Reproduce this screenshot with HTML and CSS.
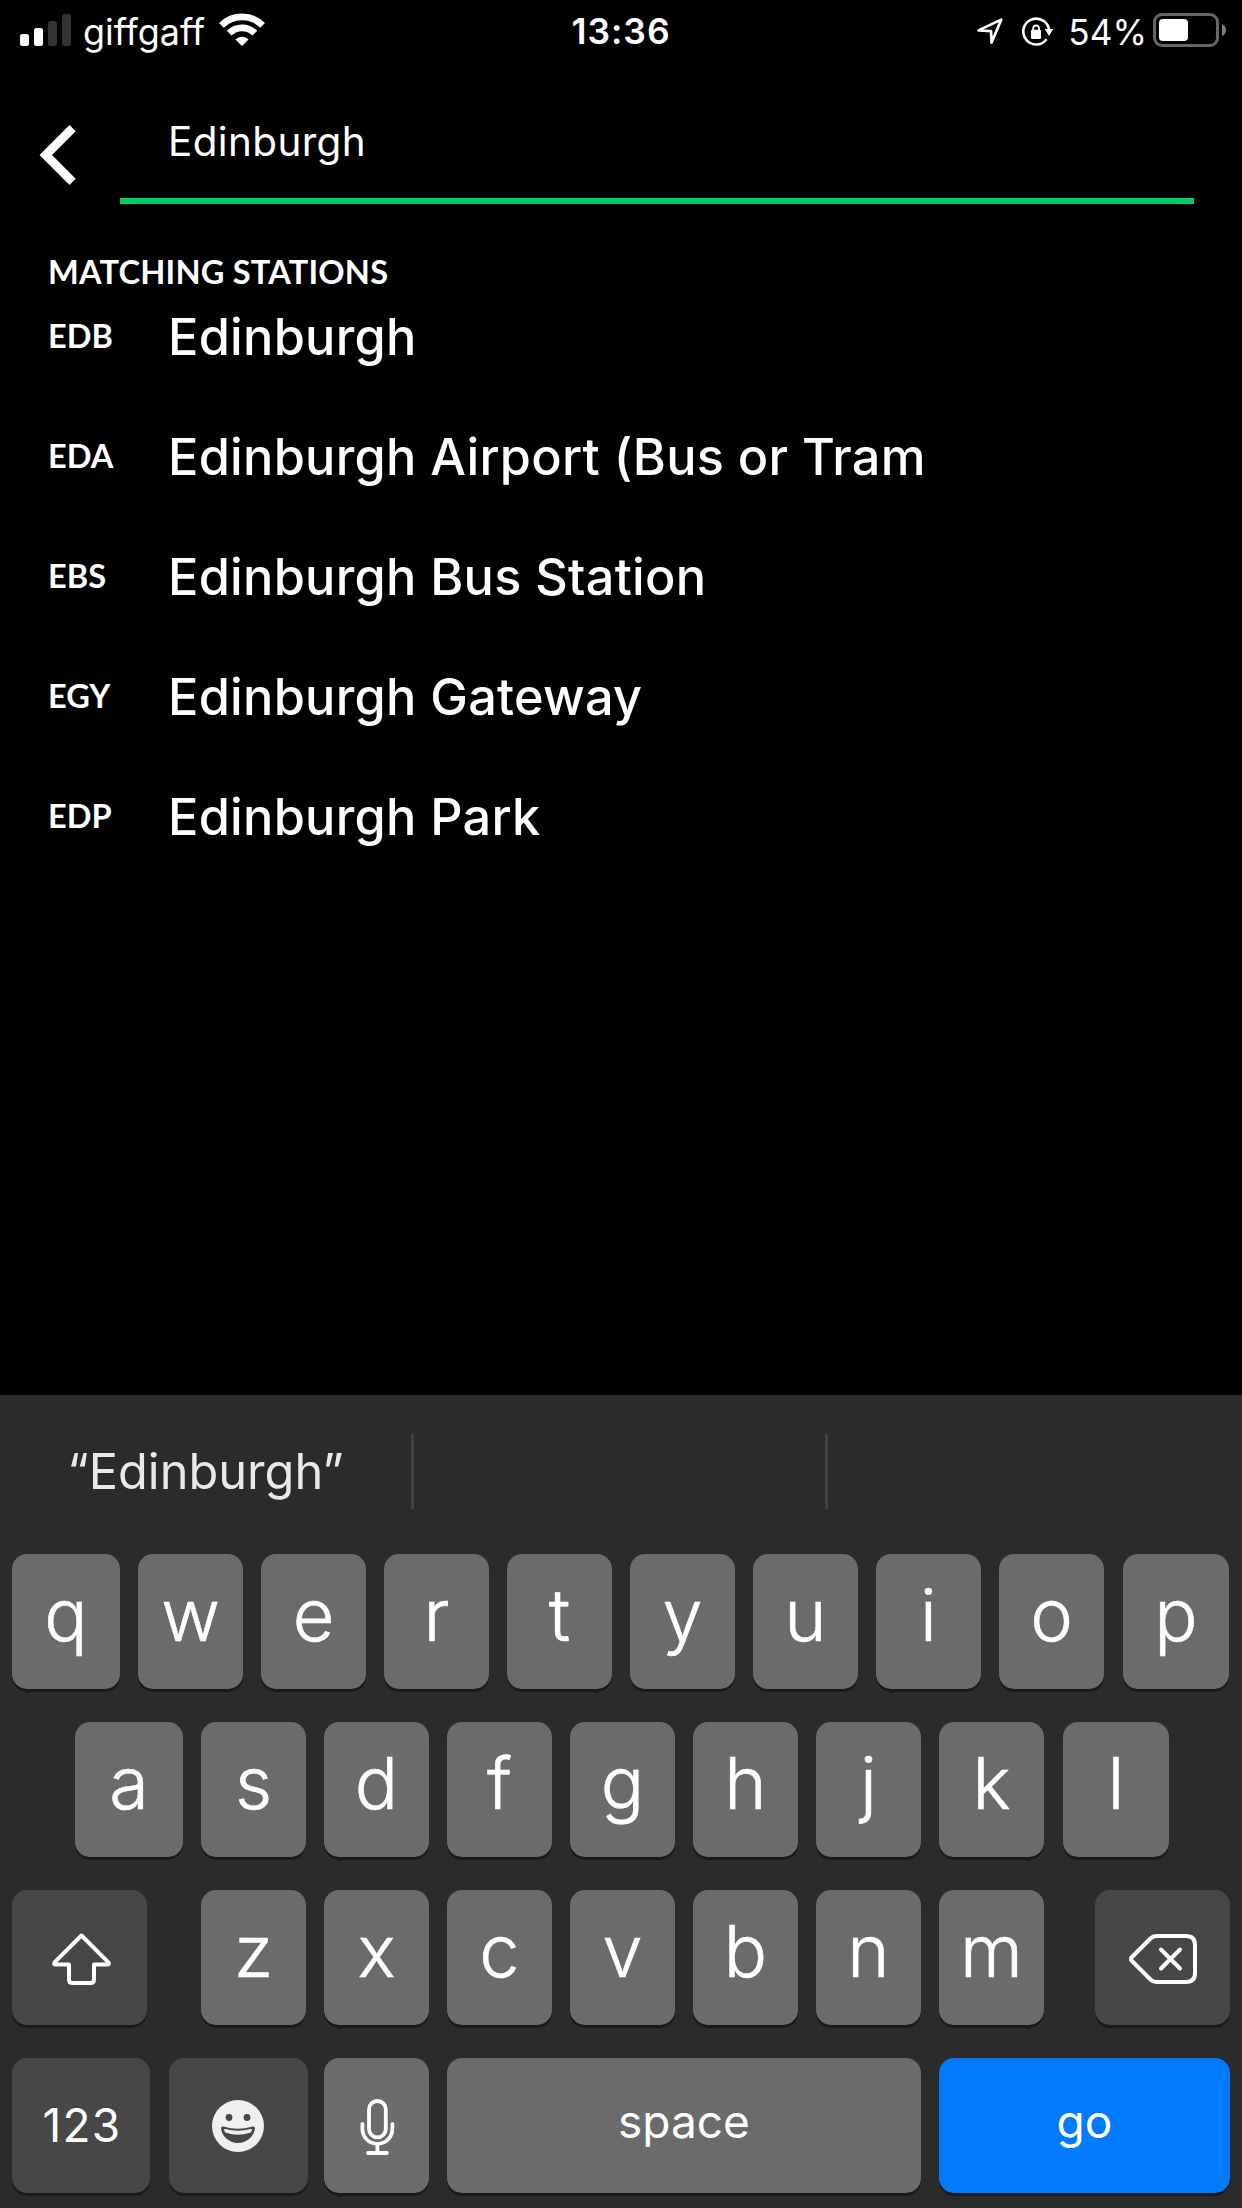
FILE: index.html
```
<!DOCTYPE html>
<html lang="en">
<head>
<meta charset="utf-8">
<title>Station search</title>
<link rel="stylesheet" href="styles.css">
</head>
<body>
<main class="screen">
  <header class="status">
    <div class="status-left">
      <svg class="signal" width="51" height="62" viewBox="20 0 51 62">
        <rect x="20" y="34" width="9" height="12" rx="2.5" fill="#fff"/>
        <rect x="34" y="28" width="9" height="18" rx="2.5" fill="#fff"/>
        <rect x="48" y="21" width="9" height="25" rx="2.5" fill="#333"/>
        <rect x="62" y="14" width="9" height="32" rx="2.5" fill="#333"/>
      </svg>
      <span class="carrier">giffgaff</span>
      <svg class="wifi" width="46" height="62" viewBox="219 0 46 62">
        <path d="M221.4 25.4A29.2 29.2 0 0 1 262.6 25.4" fill="none" stroke="#fff" stroke-width="6.8"/>
        <path d="M229.2 33.2A18.1 18.1 0 0 1 254.8 33.2" fill="none" stroke="#fff" stroke-width="6.8"/>
        <path d="M242 46L235.4 39.4A9.6 9.6 0 0 1 248.6 39.4Z" fill="#fff"/>
      </svg>
    </div>
    <div class="time">13:36</div>
    <div class="status-right">
      <svg class="location" width="28" height="62" viewBox="976 0 28 62">
        <path d="M1001.3 19.6L978.4 30.4L991 31.2L991.6 42.6Z" fill="none" stroke="#fff" stroke-width="2.7" stroke-linejoin="round"/>
      </svg>
      <svg class="lock" width="32" height="62" viewBox="1022 0 32 62">
        <path d="M1049 30A12.9 12.9 0 1 0 1046.6 39.2" fill="none" stroke="#fff" stroke-width="2.6"/>
        <path d="M1044.8 29H1053.2L1049 36Z" fill="#fff"/>
        <rect x="1031" y="29.7" width="10" height="9.3" rx="1" fill="#fff"/>
        <path d="M1033.2 30.5V28.4A2.9 2.9 0 0 1 1039 28.4V30.5" fill="none" stroke="#fff" stroke-width="1.8"/>
      </svg>
      <span class="percent">54%</span>
      <svg class="battery" width="73" height="62" viewBox="1153 0 73 62">
        <rect x="1154.5" y="14.5" width="63" height="31" rx="7.5" fill="none" stroke="#666" stroke-width="3"/>
        <rect x="1159" y="19" width="29" height="22" rx="4" fill="#fff"/>
        <path d="M1222 24Q1226 26 1226 30T1222 36Z" fill="#808080"/>
      </svg>
    </div>
  </header>

  <section class="search">
    <svg class="back" width="37" height="60" viewBox="39 125 37 60">
      <path d="M69.5 125L75.7 131.2L52 155L75.7 178.8L69.5 185L39.5 155Z" fill="#fff"/>
    </svg>
    <div class="field">Edinburgh</div>
  </section>

  <section class="results">
    <h2 class="heading">MATCHING STATIONS</h2>
    <ul class="stations">
      <li class="station"><span class="code">EDB</span><span class="name">Edinburgh</span></li>
      <li class="station"><span class="code">EDA</span><span class="name">Edinburgh Airport (Bus or Tram</span></li>
      <li class="station"><span class="code">EBS</span><span class="name">Edinburgh Bus Station</span></li>
      <li class="station"><span class="code">EGY</span><span class="name">Edinburgh Gateway</span></li>
      <li class="station"><span class="code">EDP</span><span class="name">Edinburgh Park</span></li>
    </ul>
  </section>

  <section class="keyboard">
    <div class="suggestions">
      <div class="suggestion">“Edinburgh”</div>
      <div class="suggestion"></div>
      <div class="suggestion"></div>
    </div>
    <div class="row row-top">
      <div class="key first">q</div><div class="key">w</div><div class="key">e</div><div class="key">r</div><div class="key">t</div><div class="key">y</div><div class="key">u</div><div class="key">i</div><div class="key">o</div><div class="key last">p</div>
    </div>
    <div class="row row-home">
      <div class="key first">a</div><div class="key">s</div><div class="key">d</div><div class="key">f</div><div class="key">g</div><div class="key">h</div><div class="key">j</div><div class="key">k</div><div class="key last">l</div>
    </div>
    <div class="row row-bottom">
      <div class="key dark shift">
        <svg width="59" height="52" viewBox="0 0 59 52" fill="none" stroke="#fff" stroke-width="4" stroke-linejoin="round">
          <path d="M29.5 2.5L2.8 29.2Q1.2 31.6 4 31.6H17V46.5Q17 50 20.5 50H38.5Q42 50 42 46.5V31.6H55Q57.8 31.6 56.2 29.2Z"/>
        </svg>
      </div>
      <div class="letters">
        <div class="key">z</div><div class="key">x</div><div class="key">c</div><div class="key">v</div><div class="key">b</div><div class="key">n</div><div class="key">m</div>
      </div>
      <div class="key dark delete">
        <svg width="68" height="50" viewBox="0 0 68 50" fill="none" stroke="#fff" stroke-width="4" stroke-linecap="round" stroke-linejoin="round">
          <path d="M2.5 23.5L21.5 4.5Q24 2 27.5 2H57Q66 2 66 11V39Q66 48 57 48H27.5Q24 48 21.5 45.5L2.5 26.5Q1.2 25 2.5 23.5Z"/>
          <path d="M32 15.5L51 34.5M51 15.5L32 34.5"/>
        </svg>
      </div>
    </div>
    <div class="row row-space">
      <div class="key dark numbers">123</div>
      <div class="key dark emoji">
        <svg width="52" height="52" viewBox="0 0 52 52">
          <circle cx="26" cy="26" r="26" fill="#efefef"/>
          <circle cx="17" cy="17.5" r="3.4" fill="#474747"/>
          <circle cx="35" cy="17.5" r="3.4" fill="#474747"/>
          <path d="M9 28Q9 26 11.5 26.5Q26 31 40.5 26.5Q43 26 43 28C42.5 36 35 43 26 43C17 43 9.5 36 9 28Z" fill="#474747"/>
          <path d="M12 30Q12 28.6 13.5 29Q26 32.6 38.5 29Q40 28.6 40 30Q39.5 32 38 32.7Q26 37 14 32.7Q12.5 32 12 30Z" fill="#efefef"/>
        </svg>
      </div>
      <div class="key mic">
        <svg width="35" height="56" viewBox="0 0 35 56" fill="none" stroke="#fff" stroke-width="3.8" stroke-linecap="round">
          <rect x="9" y="2" width="16.8" height="36.4" rx="8.4"/>
          <path d="M2.4 25V29.5C2.4 38.5 9 44.8 17.4 44.8S32.4 38.5 32.4 29.5V25M17.4 45V54M8 54H26.8"/>
        </svg>
      </div>
      <div class="key space">space</div>
      <div class="key go">go</div>
    </div>
  </section>
</main>
</body>
</html>
```
FILE: styles.css
```
* { box-sizing: border-box; }

body {
  margin: 0;
  background: #000;
  color: #fff;
  font-family: Inter, "Liberation Sans", sans-serif;
}

svg { display: block; flex: none; }

.screen {
  display: flex;
  flex-direction: column;
  width: 1242px;
  height: 2208px;
  overflow: hidden;
}

/* Status bar */
.status {
  display: grid;
  grid-template-columns: 1fr auto 1fr;
  height: 62px;
  padding: 0 16px 0 20px;
  line-height: 64px;
  white-space: nowrap;
}

.status-left, .status-right { display: flex; }
.status-right { justify-content: flex-end; }
.carrier { margin-left: 12px; font-size: 35.9px; }
.wifi { margin-left: 14px; }
.time { padding-right: 4px; font-size: 35.5px; font-weight: 600; letter-spacing: 1px; }
.lock { margin-left: 18px; }
.percent { margin: 0 6px 0 14px; font-size: 35.2px; }

/* Search field */
.search {
  display: flex;
  height: 142px;
  padding: 23px 48px 0 39px;
}

.back { margin-top: 40px; }

.field {
  flex: 1;
  margin-left: 44px;
  padding-left: 48px;
  border-bottom: 6px solid #00ce6b;
  font-size: 40.4px;
  line-height: 113px;
  letter-spacing: 0.4px;
}

/* Station list */
.results {
  flex: 1;
  padding: 48px 48px 0;
}

.heading, .code {
  font-family: Lato, "Liberation Sans", sans-serif;
  font-weight: 700;
  font-size: 32.6px;
}

.heading {
  margin: 0 0 -1px;
  line-height: 40px;
  letter-spacing: 0.2px;
}

.stations {
  display: flex;
  flex-direction: column;
  gap: 30px;
  margin: 0;
  padding: 0;
  list-style: none;
}

.station {
  display: grid;
  grid-template-columns: 120px 1fr;
  height: 90px;
}

.code { line-height: 89px; }

.name {
  font-size: 50.4px;
  font-weight: 500;
  line-height: 91px;
  letter-spacing: 0.27px;
}

/* Keyboard */
.keyboard {
  height: 813px;
  background: #2b2b2b;
}

.suggestions {
  display: grid;
  grid-template-columns: 414px 414px 1fr;
  height: 159px;
  padding: 39px 0 45px;
}

.suggestion {
  border-right: 3px solid #414141;
  color: #e9e9e9;
  font-size: 48.7px;
  line-height: 76px;
  height: 75px;
  text-align: center;
}

.suggestion:last-child { border-right: 0; }

.row {
  display: flex;
  gap: 18px;
  height: 135px;
  margin-bottom: 33px;
  padding: 0 12px;
}

.row-home { padding: 0 75px; }
.row-bottom { justify-content: space-between; }
.letters { display: flex; gap: 18px; margin-left: 3px; }

.key {
  display: flex;
  flex: none;
  align-items: center;
  justify-content: center;
  width: 105px;
  height: 135px;
  padding-bottom: 13px;
  border-radius: 15px;
  background: #6b6b6b;
  box-shadow: 0 3px 0 #1a1a1a;
  font-size: 72px;
  font-weight: 300;
  line-height: 1;
  -webkit-text-stroke: 0.6px #fff;
}

.first { width: 108px; }
.last { width: 106px; margin-left: 1px; }
.dark { background: #474747; }
.shift { width: 135px; padding: 3px 0 0 4px; }
.delete { width: 135px; padding: 3px 0 0 1px; }

.numbers, .space, .go {
  font-size: 46px;
  font-weight: 400;
  -webkit-text-stroke: 0;
}

.numbers { width: 138px; padding: 0 0 2px 2px; letter-spacing: 1.2px; }
.emoji { width: 139px; margin: 0 -2px 0 1px; padding: 1px 2px 0 0; }
.mic { padding: 3px 0 0 2px; }
.space { width: 474px; padding-bottom: 10px; }
.go { width: 291px; padding-bottom: 10px; background: #007aff; }
```
